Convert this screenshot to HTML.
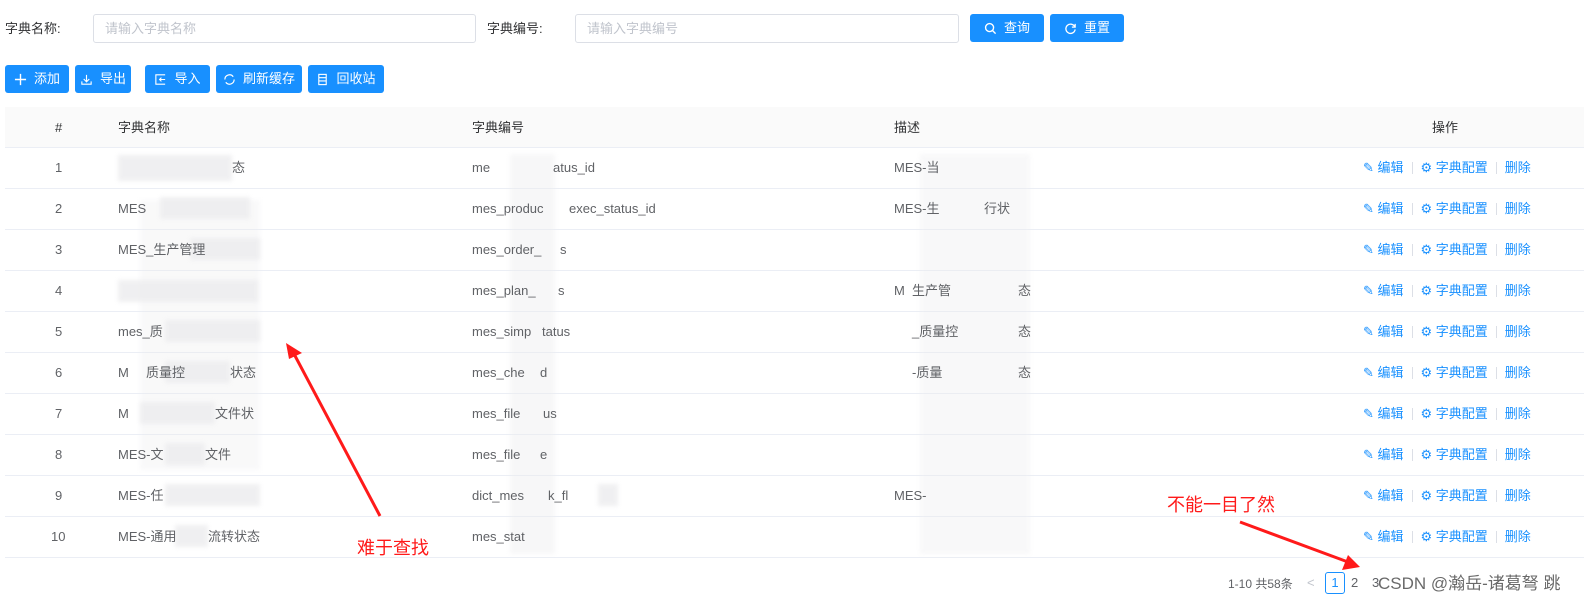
<!DOCTYPE html>
<html><head><meta charset="utf-8"><style>
*{box-sizing:border-box;margin:0;padding:0}
body{width:1584px;height:610px;overflow:hidden;background:#fff;font-family:"Liberation Sans","Noto Sans CJK SC",sans-serif;font-size:13px;color:#606266;position:relative}
.a{position:absolute;white-space:nowrap;line-height:16px;height:16px}
.lbl{color:#303133;font-size:13px}
.inp{position:absolute;border:1px solid #dcdfe6;border-radius:3px;height:29px;color:#c0c4cc;font-size:13px;padding:0 11px;line-height:27px}
.btn{position:absolute;background:#1890ff;color:#fff;border-radius:3px;height:28px;font-size:13px;display:flex;align-items:center;justify-content:center;gap:7px;line-height:16px}
.btn svg{width:13px;height:13px}
.hdr{position:absolute;left:5px;top:107px;width:1579px;height:41px;background:#fafafa;border-bottom:1px solid #ebeef5}
.row{position:absolute;left:5px;width:1579px;height:41px;border-bottom:1px solid #ebeef5}
.ops{position:absolute;left:1363px;color:#1890ff;font-size:13px;display:flex;align-items:center;line-height:16px;height:16px}
.ops .s{width:1px;height:12px;background:#dcdfe6;margin:0 8px}
.bl{position:absolute;background:#ececee;opacity:.8;filter:blur(2px)}
.red{color:#ff1a1a;font-size:18px;position:absolute;line-height:22px}
</style></head><body>
<div class="a lbl" style="left:5px;top:21px">字典名称:</div>
<div class="inp" style="left:93px;top:14px;width:383px">请输入字典名称</div>
<div class="a lbl" style="left:487px;top:21px">字典编号:</div>
<div class="inp" style="left:575px;top:14px;width:384px">请输入字典编号</div>
<div class="btn" style="left:970px;top:14px;width:74px"><svg viewBox="0 0 14 14"><circle cx="6" cy="6" r="4.3" fill="none" stroke="#fff" stroke-width="1.5"/><path d="M9 9l3.5 3.5" stroke="#fff" stroke-width="1.5"/></svg>查询</div>
<div class="btn" style="left:1050px;top:14px;width:74px"><svg viewBox="0 0 14 14"><path d="M11.5 5A5 5 0 1 0 12 8" fill="none" stroke="#fff" stroke-width="1.4"/><path d="M12 2v3.5H8.5" fill="none" stroke="#fff" stroke-width="1.4"/></svg>重置</div>

<div class="btn" style="left:5px;top:65px;width:64px"><svg viewBox="0 0 14 14"><path d="M7 1v12M1 7h12" stroke="#fff" stroke-width="1.5"/></svg>添加</div>
<div class="btn" style="left:75px;top:65px;width:56px"><svg viewBox="0 0 14 14"><path d="M7 2v7M4 6.5L7 9.5 10 6.5M2 9v3h10V9" fill="none" stroke="#fff" stroke-width="1.2"/></svg>导出</div>
<div class="btn" style="left:145px;top:65px;width:65px"><svg viewBox="0 0 14 14"><path d="M12 2H2v10h10M6 7h6M8 5L6 7l2 2" fill="none" stroke="#fff" stroke-width="1.2"/></svg>导入</div>
<div class="btn" style="left:216px;top:65px;width:86px"><svg viewBox="0 0 14 14"><path d="M2 7a5 5 0 0 1 9-3M12 7a5 5 0 0 1-9 3" fill="none" stroke="#fff" stroke-width="1.3"/></svg>刷新缓存</div>
<div class="btn" style="left:308px;top:65px;width:76px"><svg viewBox="0 0 14 14"><rect x="3" y="1.5" width="8" height="11" fill="none" stroke="#fff" stroke-width="1.2"/><path d="M3 5h8M3 8.5h8" stroke="#fff" stroke-width="1.2"/></svg>回收站</div>

<div class="hdr"></div>
<div class="a" style="left:55px;top:120px;color:#303133">#</div>
<div class="a" style="left:118px;top:120px;color:#303133">字典名称</div>
<div class="a" style="left:472px;top:120px;color:#303133">字典编号</div>
<div class="a" style="left:894px;top:120px;color:#303133">描述</div>
<div class="a" style="left:1432px;top:120px;color:#303133">操作</div>

<div class="row" style="top:148px"></div><div class="row" style="top:189px"></div><div class="row" style="top:230px"></div><div class="row" style="top:271px"></div><div class="row" style="top:312px"></div><div class="row" style="top:353px"></div><div class="row" style="top:394px"></div><div class="row" style="top:435px"></div><div class="row" style="top:476px"></div><div class="row" style="top:517px"></div>

<div class="bl" style="left:118px;top:155px;width:114px;height:26px"></div>
<div class="bl" style="left:140px;top:200px;width:120px;height:270px;opacity:.3"></div>
<div class="bl" style="left:160px;top:197px;width:90px;height:22px"></div>
<div class="bl" style="left:190px;top:238px;width:70px;height:22px"></div>
<div class="bl" style="left:118px;top:280px;width:140px;height:22px"></div>
<div class="bl" style="left:165px;top:320px;width:95px;height:22px"></div>
<div class="bl" style="left:165px;top:361px;width:65px;height:22px"></div>
<div class="bl" style="left:140px;top:402px;width:75px;height:22px"></div>
<div class="bl" style="left:165px;top:443px;width:40px;height:22px"></div>
<div class="bl" style="left:165px;top:484px;width:95px;height:22px"></div>
<div class="bl" style="left:175px;top:525px;width:33px;height:22px"></div>
<div class="bl" style="left:510px;top:154px;width:45px;height:400px;opacity:.4"></div>
<div class="bl" style="left:598px;top:484px;width:20px;height:22px"></div>
<div class="bl" style="left:920px;top:154px;width:110px;height:400px;opacity:.35"></div>

<div class="a" style="left:55px;top:160px">1</div><div class="a" style="left:232px;top:160px">态</div><div class="a" style="left:472px;top:160px">me</div><div class="a" style="left:553px;top:160px">atus_id</div><div class="a" style="left:894px;top:160px">MES-当</div>
<div class="a" style="left:55px;top:201px">2</div><div class="a" style="left:118px;top:201px">MES</div><div class="a" style="left:472px;top:201px">mes_produc</div><div class="a" style="left:569px;top:201px">exec_status_id</div><div class="a" style="left:894px;top:201px">MES-生</div><div class="a" style="left:984px;top:201px">行状</div>
<div class="a" style="left:55px;top:242px">3</div><div class="a" style="left:118px;top:242px">MES_生产管理</div><div class="a" style="left:472px;top:242px">mes_order_</div><div class="a" style="left:560px;top:242px">s</div>
<div class="a" style="left:55px;top:283px">4</div><div class="a" style="left:472px;top:283px">mes_plan_</div><div class="a" style="left:558px;top:283px">s</div><div class="a" style="left:894px;top:283px">M</div><div class="a" style="left:912px;top:283px">生产管</div><div class="a" style="left:1018px;top:283px">态</div>
<div class="a" style="left:55px;top:324px">5</div><div class="a" style="left:118px;top:324px">mes_质</div><div class="a" style="left:472px;top:324px">mes_simp</div><div class="a" style="left:542px;top:324px">tatus</div><div class="a" style="left:912px;top:324px">_质量控</div><div class="a" style="left:1018px;top:324px">态</div>
<div class="a" style="left:55px;top:365px">6</div><div class="a" style="left:118px;top:365px">M</div><div class="a" style="left:146px;top:365px">质量控</div><div class="a" style="left:230px;top:365px">状态</div><div class="a" style="left:472px;top:365px">mes_che</div><div class="a" style="left:540px;top:365px">d</div><div class="a" style="left:912px;top:365px">-质量</div><div class="a" style="left:1018px;top:365px">态</div>
<div class="a" style="left:55px;top:406px">7</div><div class="a" style="left:118px;top:406px">M</div><div class="a" style="left:215px;top:406px">文件状</div><div class="a" style="left:472px;top:406px">mes_file</div><div class="a" style="left:543px;top:406px">us</div>
<div class="a" style="left:55px;top:447px">8</div><div class="a" style="left:118px;top:447px">MES-文</div><div class="a" style="left:205px;top:447px">文件</div><div class="a" style="left:472px;top:447px">mes_file</div><div class="a" style="left:540px;top:447px">e</div>
<div class="a" style="left:55px;top:488px">9</div><div class="a" style="left:118px;top:488px">MES-任</div><div class="a" style="left:472px;top:488px">dict_mes</div><div class="a" style="left:548px;top:488px">k_fl</div><div class="a" style="left:894px;top:488px">MES-</div>
<div class="a" style="left:51px;top:529px">10</div><div class="a" style="left:118px;top:529px">MES-通用</div><div class="a" style="left:208px;top:529px">流转状态</div><div class="a" style="left:472px;top:529px">mes_stat</div>

<div class="ops" style="top:160px"><span>✎ 编辑</span><span class="s"></span><span>⚙ 字典配置</span><span class="s"></span><span>删除</span></div>
<div class="ops" style="top:201px"><span>✎ 编辑</span><span class="s"></span><span>⚙ 字典配置</span><span class="s"></span><span>删除</span></div>
<div class="ops" style="top:242px"><span>✎ 编辑</span><span class="s"></span><span>⚙ 字典配置</span><span class="s"></span><span>删除</span></div>
<div class="ops" style="top:283px"><span>✎ 编辑</span><span class="s"></span><span>⚙ 字典配置</span><span class="s"></span><span>删除</span></div>
<div class="ops" style="top:324px"><span>✎ 编辑</span><span class="s"></span><span>⚙ 字典配置</span><span class="s"></span><span>删除</span></div>
<div class="ops" style="top:365px"><span>✎ 编辑</span><span class="s"></span><span>⚙ 字典配置</span><span class="s"></span><span>删除</span></div>
<div class="ops" style="top:406px"><span>✎ 编辑</span><span class="s"></span><span>⚙ 字典配置</span><span class="s"></span><span>删除</span></div>
<div class="ops" style="top:447px"><span>✎ 编辑</span><span class="s"></span><span>⚙ 字典配置</span><span class="s"></span><span>删除</span></div>
<div class="ops" style="top:488px"><span>✎ 编辑</span><span class="s"></span><span>⚙ 字典配置</span><span class="s"></span><span>删除</span></div>
<div class="ops" style="top:529px"><span>✎ 编辑</span><span class="s"></span><span>⚙ 字典配置</span><span class="s"></span><span>删除</span></div>

<div class="a" style="left:1228px;top:576px;font-size:12px">1-10 共58条</div>
<div class="a" style="left:1307px;top:575px;color:#c0c4cc">&lt;</div>
<div class="a" style="left:1325px;top:572px;width:20px;height:22px;border:1px solid #1890ff;border-radius:3px;color:#1890ff;text-align:center;line-height:20px">1</div>
<div class="a" style="left:1351px;top:575px">2</div>
<div class="a" style="left:1372px;top:575px">3</div>
<div class="a" style="left:1378px;top:574px;font-size:17px;line-height:20px;height:20px;color:#444;opacity:.8">CSDN @瀚岳-诸葛弩 跳</div>

<svg class="a" style="left:0;top:0;height:610px;line-height:normal" width="1584" height="610"><path d="M380 516L293 352" stroke="#ff1a1a" stroke-width="3"/><path d="M286 343l16 10-13 6z" fill="#ff1a1a"/><path d="M1240 522L1348 562" stroke="#ff1a1a" stroke-width="3"/><path d="M1360 567l-18 3 6-15z" fill="#ff1a1a"/></svg>
<div class="red" style="left:357px;top:537px">难于查找</div>
<div class="red" style="left:1167px;top:494px">不能一目了然</div>
</body></html>
